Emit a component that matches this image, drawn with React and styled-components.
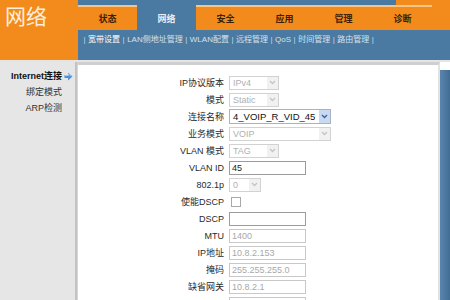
import styled, { createGlobalStyle } from 'styled-components';

const ORANGE = '#f28b1c';
const BLUE = '#4a7aa2';

const GlobalStyle = createGlobalStyle`
  body {
    margin: 0;
    background: #fff;
    font-family: "Liberation Sans", "Noto Sans CJK SC", sans-serif;
  }
`;

const tabs = ['状态', '网络', '安全', '应用', '管理', '诊断'];
const subLinks = ['宽带设置', 'LAN侧地址管理', 'WLAN配置', '远程管理', 'QoS', '时间管理', '路由管理'];
const sideItems = ['Internet连接', '绑定模式', 'ARP检测'];

const rows = [
    { label: 'IP协议版本', type: 'select', value: 'IPv4', w: 50, disabled: true },
    { label: '模式', type: 'select', value: 'Static', w: 50, disabled: true },
    { label: '连接名称', type: 'select', value: '4_VOIP_R_VID_45', w: 102, active: true },
    { label: '业务模式', type: 'select', value: 'VOIP', w: 102, disabled: true },
    { label: 'VLAN 模式', type: 'select', value: 'TAG', w: 50, disabled: true },
    { label: 'VLAN ID', type: 'input', value: '45', w: 77 },
    { label: '802.1p', type: 'select', value: '0', w: 32, disabled: true },
    { label: '使能DSCP', type: 'check' },
    { label: 'DSCP', type: 'input', value: '', w: 77 },
    { label: 'MTU', type: 'input', value: '1400', w: 77, disabled: true },
    { label: 'IP地址', type: 'input', value: '10.8.2.153', w: 77, disabled: true },
    { label: '掩码', type: 'input', value: '255.255.255.0', w: 77, disabled: true },
    { label: '缺省网关', type: 'input', value: '10.8.2.1', w: 77, disabled: true },
    { label: 'DNS1', type: 'input', value: '192.168.8.1', w: 77, disabled: true },
];

const Chevron = ({ color }) => (
    <svg width="7" height="5" viewBox="0 0 7 5">
        <path d="M1 1 L3.5 3.5 L6 1" fill="none" stroke={color} strokeWidth="1.3" />
    </svg>
);

const SideArrow = () => (
    <svg width="9" height="9" viewBox="0 0 9 9">
        <path d="M0.5 3 H4 V0.5 L8.5 4.5 L4 8.5 V6 H0.5 Z" fill="#4f8fd6" />
        <path d="M1 3.5 H4.5 V1.8 L7.2 4.4" fill="none" stroke="#b9d8f7" strokeWidth="0.8" />
    </svg>
);

const Field = ({ row }) => {
    if (row.type === 'check') return <CheckBox />;
    if (row.type === 'input') {
        return <InputBox $w={row.w} $disabled={row.disabled}>{row.value}</InputBox>;
    }
    return (
        <SelectBox $w={row.w} $disabled={row.disabled} $active={row.active}>
            <span>{row.value}</span>
            <ArrowBox $active={row.active}>
                <Chevron color={row.active ? '#3a5f9e' : '#c4c4c4'} />
            </ArrowBox>
        </SelectBox>
    );
};

const App = () => {
    return (
        <Page>
            <GlobalStyle />
            <Header>
                <Logo>网络</Logo>
                <NavColumn>
                    <TabRow>
                        {tabs.map((t, i) => (
                            <Tab key={t} $selected={i === 1}>{t}</Tab>
                        ))}
                        <TabFill />
                    </TabRow>
                    <SubNav>
                        <Sep>|</Sep>
                        {subLinks.map((s, i) => (
                            <span key={s}>
                                <SubLink $current={i === 0}>{s}</SubLink>
                                <Sep>|</Sep>
                            </span>
                        ))}
                    </SubNav>
                </NavColumn>
            </Header>
            <Body>
                <Sidebar>
                    {sideItems.map((s, i) => (
                        <SideItem key={s} $current={i === 0}>
                            {s}
                            <IconSlot>{i === 0 && <SideArrow />}</IconSlot>
                        </SideItem>
                    ))}
                </Sidebar>
                <Main>
                    <Form>
                        {rows.map((r) => (
                            <Row key={r.label}>
                                <Label>{r.label}</Label>
                                <Field row={r} />
                            </Row>
                        ))}
                    </Form>
                </Main>
                <RightStrip />
            </Body>
        </Page>
    );
};

export default App;

const Page = styled.div`
    width: 450px;
    height: 300px;
    overflow: hidden;
    display: flex;
    flex-direction: column;
    background: #fff;
`;

const Header = styled.div`
    display: grid;
    grid-template-columns: 78px 1fr;
    height: 60px;
    flex-shrink: 0;
    border-bottom: 2px solid #e4e4e4;
`;

const Logo = styled.div`
    background: ${ORANGE};
    color: #fdeede;
    font-family: "Noto Sans CJK SC", sans-serif;
    font-size: 21px;
    line-height: 1;
    padding: 5px 0 0 5px;
`;

const NavColumn = styled.div`
    display: flex;
    flex-direction: column;
`;

const TabRow = styled.div`
    display: flex;
    height: 30px;
    background: linear-gradient(to right, ${BLUE} 0 318px, ${ORANGE} 318px);
`;

const Tab = styled.div`
    width: 59px;
    margin-top: ${(p) => (p.$selected ? '0' : '5px')};
    background: ${(p) => (p.$selected ? BLUE : ORANGE)};
    border-top: ${(p) => (p.$selected ? 'none' : '2px solid #f8c486')};
    display: flex;
    align-items: center;
    justify-content: center;
    padding-top: ${(p) => (p.$selected ? '7px' : '0')};
    font-size: 9px;
    font-weight: bold;
    color: ${(p) => (p.$selected ? '#e8eef5' : '#3b1f08')};
`;

const TabFill = styled.div`
    flex: 1;
    background: ${ORANGE};
`;

const SubNav = styled.div`
    flex: 1;
    background: ${BLUE};
    padding: 4px 0 0 3px;
    font-size: 8px;
    line-height: 11px;
    color: #d5e1ec;
    white-space: nowrap;
`;

const Sep = styled.span`
    color: #c9d7e4;
    margin: 0 2.5px;
`;

const SubLink = styled.span`
    color: ${(p) => (p.$current ? '#ffffff' : '#d5e1ec')};
`;

const Body = styled.div`
    flex: 1;
    display: flex;
    min-height: 0;
`;

const Sidebar = styled.div`
    width: 75px;
    flex-shrink: 0;
    background: #e6e6e6;
    border-right: 2px solid #c2c2c2;
    padding-top: 9px;
    display: flex;
    flex-direction: column;
    gap: 5px;
`;

const SideItem = styled.div`
    display: flex;
    justify-content: flex-end;
    align-items: center;
    font-size: 9px;
    line-height: 11px;
    font-weight: ${(p) => (p.$current ? 'bold' : 'normal')};
    color: ${(p) => (p.$current ? '#111' : '#333')};
`;

const IconSlot = styled.span`
    width: 13px;
    display: flex;
    justify-content: center;
`;

const Main = styled.div`
    flex: 1;
    border-top: 3px solid #cfcfcf;
    border-left: 1px solid #d8d8d8;
    border-right: 2px solid #e2e2e2;
    background: #fff;
`;

const Form = styled.div`
    display: flex;
    flex-direction: column;
    padding-top: 9px;
`;

const Row = styled.div`
    display: grid;
    grid-template-columns: 146px auto;
    column-gap: 5px;
    height: 17px;
    align-items: center;
`;

const Label = styled.div`
    text-align: right;
    font-size: 9px;
    color: #2a2a2a;
    white-space: nowrap;
`;

const InputBox = styled.div`
    box-sizing: border-box;
    width: ${(p) => p.$w}px;
    height: 14px;
    border: 1px solid ${(p) => (p.$disabled ? '#c8c8c8' : '#9c9c9c')};
    background: #fff;
    font-size: 9px;
    line-height: 12px;
    padding-left: 2px;
    color: ${(p) => (p.$disabled ? '#a8a8a8' : '#222')};
`;

const SelectBox = styled.div`
    box-sizing: border-box;
    width: ${(p) => p.$w}px;
    height: ${(p) => (p.$active ? '15px' : '14px')};
    border: 1px solid ${(p) => (p.$disabled ? '#d2d2d2' : '#a6b3c6')};
    background: #fff;
    display: flex;
    align-items: center;
    justify-content: space-between;
    font-size: ${(p) => (p.$active ? '9.5px' : '9px')};
    color: ${(p) => (p.$disabled ? '#b0b0b0' : '#111')};
    span {
        padding-left: 3px;
        white-space: nowrap;
        overflow: hidden;
    }
`;

const ArrowBox = styled.div`
    width: 11px;
    height: 100%;
    display: flex;
    align-items: center;
    justify-content: center;
    background: ${(p) => (p.$active ? '#c9d9f1' : '#f1f1f1')};
`;

const CheckBox = styled.div`
    width: 8px;
    height: 8px;
    margin-left: 2px;
    border: 1px solid #a8a8a8;
    background: #fff;
`;

const RightStrip = styled.div`
    width: 10px;
    flex-shrink: 0;
    margin-top: 8px;
    background: linear-gradient(to right, #5a86ad, #416d94);
`;
